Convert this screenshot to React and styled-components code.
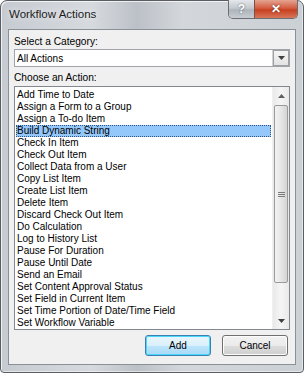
import React from 'react';
import styled, { createGlobalStyle } from 'styled-components';

const GlobalStyle = createGlobalStyle`
    html, body {
        margin: 0;
        padding: 0;
        background: #ffffff;
    }
    * {
        box-sizing: border-box;
    }
`;

const actions = [
    'Add Time to Date',
    'Assign a Form to a Group',
    'Assign a To-do Item',
    'Build Dynamic String',
    'Check In Item',
    'Check Out Item',
    'Collect Data from a User',
    'Copy List Item',
    'Create List Item',
    'Delete Item',
    'Discard Check Out Item',
    'Do Calculation',
    'Log to History List',
    'Pause For Duration',
    'Pause Until Date',
    'Send an Email',
    'Set Content Approval Status',
    'Set Field in Current Item',
    'Set Time Portion of Date/Time Field',
    'Set Workflow Variable',
];

const Window = styled.div`
    width: 304px;
    height: 373px;
    border: 1px solid #5a5d62;
    border-radius: 7px 7px 4px 4px;
    background: linear-gradient(90deg, #c6cbd1 0%, #d6dadf 30%, #bcc1c7 45%, #d3d7dc 60%, #cbd0d5 100%);
    padding: 0 7px 7px 7px;
    display: flex;
    flex-direction: column;
    font-family: 'Liberation Sans', Arial, sans-serif;
    box-shadow: inset 1px 1px 0 rgba(255, 255, 255, 0.7), inset -1px -1px 0 rgba(255, 255, 255, 0.5);
`;

const TitleBar = styled.div`
    height: 28px;
    display: flex;
    align-items: flex-start;
`;

const Title = styled.span`
    margin-top: 7px;
    margin-left: 1px;
    font-size: 11.5px;
    color: #1c1c1c;
    text-shadow: 0 0 6px rgba(255, 255, 255, 0.9);
`;

const Caption = styled.div`
    margin-left: auto;
    margin-top: -1px;
    margin-right: -2px;
    display: flex;
    border: 1px solid #6b6f75;
    border-top: none;
    border-radius: 0 0 5px 5px;
    overflow: hidden;
    height: 19px;
`;

const CaptionButton = styled.div`
    width: ${p => p.$w}px;
    height: 100%;
    display: flex;
    align-items: center;
    justify-content: center;
    font-size: 12px;
    font-weight: bold;
    color: #ffffff;
    background: ${p =>
        p.$close
            ? 'linear-gradient(180deg, #e4a491 0%, #d45d42 45%, #c7401f 55%, #d8765b 100%)'
            : 'linear-gradient(180deg, #e4e7eb 0%, #c5cad0 45%, #aeb4bb 55%, #c8cdd3 100%)'};
    border-left: ${p => (p.$close ? '1px solid #7a5048' : 'none')};
    text-shadow: 0 0 2px rgba(0, 0, 0, 0.6);
`;

const Client = styled.div`
    flex: 1;
    background: #f0f0f0;
    border: 1px solid #8a9097;
    padding: 5px 5px 0 5px;
    display: flex;
    flex-direction: column;
`;

const Label = styled.div`
    font-size: 10.2px;
    color: #000;
    height: 13px;
    line-height: 13px;
    margin-top: ${p => p.$mt}px;
`;

const Select = styled.div`
    height: 18px;
    border: 1px solid #a0a4a8;
    background: #fff;
    display: flex;
    align-items: center;
    padding-left: 2px;
    font-size: 10px;
    margin-top: 1px;
`;

const SelectText = styled.span`
    flex: 1;
`;

const DropButton = styled.div`
    width: 17px;
    height: 16px;
    border-left: 1px solid #d0d3d6;
    background: linear-gradient(180deg, #f6f6f6 0%, #e2e2e2 100%);
    box-shadow: inset 0 0 0 1px #9da1a6;
    display: flex;
    align-items: center;
    justify-content: center;
`;

const ListBox = styled.div`
    height: 244px;
    border: 1px solid #828790;
    background: #fff;
    display: flex;
    margin-top: 2px;
`;

const Items = styled.div`
    flex: 1;
    padding: 2px 1px 0 1px;
    overflow: hidden;
`;

const Item = styled.div`
    height: 12px;
    line-height: 12px;
    font-size: 10px;
    padding-left: 1px;
    color: #000;
    white-space: nowrap;
    background: ${p => (p.$selected ? '#95c8fa' : 'transparent')};
    outline: ${p => (p.$selected ? '1px dotted #33527a' : 'none')};
    outline-offset: -1px;
`;

const ScrollBar = styled.div`
    width: 17px;
    display: flex;
    flex-direction: column;
    background: linear-gradient(90deg, #e9e9e9 0%, #f5f5f5 50%, #e9e9e9 100%);
    border-left: 1px solid #f0f0f0;
`;

const Arrow = styled.div`
    height: 17px;
    display: flex;
    align-items: center;
    justify-content: center;
`;

const Track = styled.div`
    flex: 1;
    display: flex;
    flex-direction: column;
`;

const Thumb = styled.div`
    height: 178px;
    margin: 1px 1px 0 1px;
    border: 1px solid #9a9a9a;
    border-radius: 2px;
    background: linear-gradient(90deg, #f3f3f3 0%, #e6e6e6 50%, #d4d4d4 100%);
    display: flex;
    align-items: center;
    justify-content: center;
`;

const Buttons = styled.div`
    display: flex;
    justify-content: flex-end;
    gap: 11px;
    padding-right: 2px;
    margin-top: 5px;
`;

const Button = styled.div`
    width: 66px;
    height: 21px;
    border: 1px solid ${p => (p.$default ? '#3c7fb1' : '#707070')};
    border-radius: 3px;
    background: ${p =>
        p.$default
            ? 'linear-gradient(180deg, #eaf6fd 0%, #d9f0fc 50%, #bee6fd 51%, #a7d9f5 100%)'
            : 'linear-gradient(180deg, #f2f2f2 0%, #ebebeb 50%, #dddddd 51%, #cfcfcf 100%)'};
    box-shadow: ${p => (p.$default ? 'inset 0 0 0 1px #48d8fb' : 'inset 0 0 0 1px #fcfcfc')};
    display: flex;
    align-items: center;
    justify-content: center;
    font-size: 10px;
    color: #000;
`;

const Tri = ({ up }) => (
    <svg width="7" height="4" viewBox="0 0 7 4">
        <path d={up ? 'M0 4 L3.5 0 L7 4 Z' : 'M0 0 L7 0 L3.5 4 Z'} fill={up ? '#606060' : '#404040'} />
    </svg>
);

const Grip = () => (
    <svg width="7" height="7" viewBox="0 0 7 7">
        <path d="M0 1.5 H7 M0 3.5 H7 M0 5.5 H7" stroke="#7a7a7a" strokeWidth="1" />
    </svg>
);

export default function App() {
    return (
        <>
            <GlobalStyle />
            <Window>
                <TitleBar>
                    <Title>Workflow Actions</Title>
                    <Caption>
                        <CaptionButton $w={25}>?</CaptionButton>
                        <CaptionButton $w={43} $close>
                            ✕
                        </CaptionButton>
                    </Caption>
                </TitleBar>
                <Client>
                    <Label $mt={0}>Select a Category:</Label>
                    <Select>
                        <SelectText>All Actions</SelectText>
                        <DropButton>
                            <Tri />
                        </DropButton>
                    </Select>
                    <Label $mt={4}>Choose an Action:</Label>
                    <ListBox>
                        <Items>
                            {actions.map(a => (
                                <Item key={a} $selected={a === 'Build Dynamic String'}>
                                    {a}
                                </Item>
                            ))}
                        </Items>
                        <ScrollBar>
                            <Arrow>
                                <Tri up />
                            </Arrow>
                            <Track>
                                <Thumb>
                                    <Grip />
                                </Thumb>
                            </Track>
                            <Arrow>
                                <Tri />
                            </Arrow>
                        </ScrollBar>
                    </ListBox>
                    <Buttons>
                        <Button $default>Add</Button>
                        <Button>Cancel</Button>
                    </Buttons>
                </Client>
            </Window>
        </>
    );
}
